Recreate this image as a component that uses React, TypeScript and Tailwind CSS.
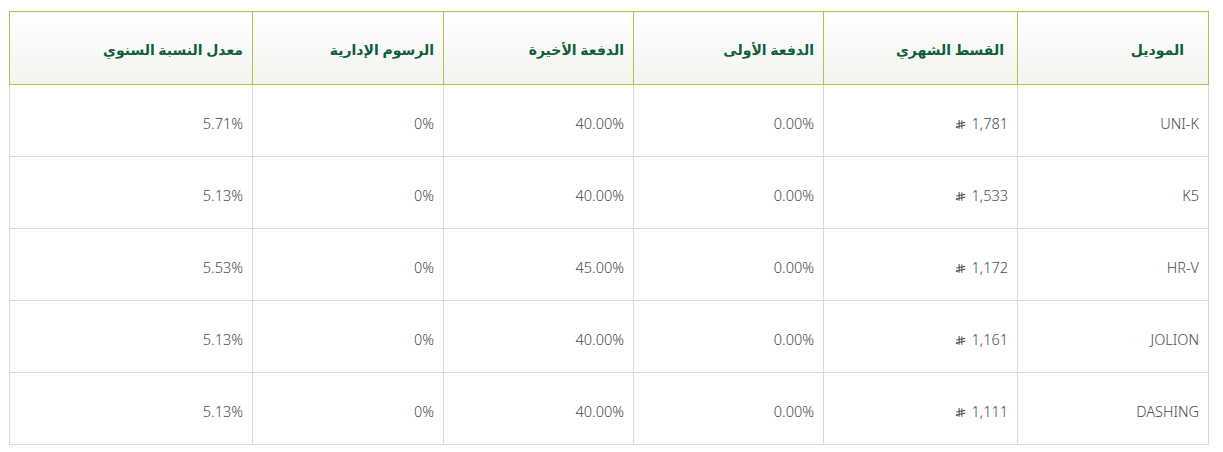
const headers: { label: string; width: string; pad: string }[] = [
  { label: "الموديل", width: "w-[191px]", pad: "pr-[24px]" },
  { label: "القسط الشهري", width: "w-[194px]", pad: "pr-[13px]" },
  { label: "الدفعة الأولى", width: "w-[190px]", pad: "pr-[9px]" },
  { label: "الدفعة الأخيرة", width: "w-[190px]", pad: "pr-[9px]" },
  { label: "الرسوم الإدارية", width: "w-[191px]", pad: "pr-[9px]" },
  { label: "معدل النسبة السنوي", width: "w-[243px]", pad: "pr-[9px]" },
];

const rows = [
  { model: "UNI-K", monthly: "1,781", down: "0.00%", balloon: "40.00%", fees: "0%", rate: "5.71%" },
  { model: "K5", monthly: "1,533", down: "0.00%", balloon: "40.00%", fees: "0%", rate: "5.13%" },
  { model: "HR-V", monthly: "1,172", down: "0.00%", balloon: "45.00%", fees: "0%", rate: "5.53%" },
  { model: "JOLION", monthly: "1,161", down: "0.00%", balloon: "40.00%", fees: "0%", rate: "5.13%" },
  { model: "DASHING", monthly: "1,111", down: "0.00%", balloon: "40.00%", fees: "0%", rate: "5.13%" },
];

function RiyalSign() {
  return (
    <svg
      viewBox="0 0 12 12"
      className="inline-block w-[11px] h-[11px] mr-[6px] align-[-1px] text-[#555]"
      fill="none"
      stroke="currentColor"
      strokeWidth="1.2"
    >
      <path d="M4.5 1v9.5" />
      <path d="M7.5 1.5v9" />
      <path d="M1 9.5c1-0.2 2-0.6 2.6-1.5" />
      <path d="M1.5 5.5l9.5-1.8" />
      <path d="M1.5 8.5l9.5-1.8" />
    </svg>
  );
}

export default function App() {
  const cell = "border border-[#dcdcd6] h-[72px] pr-[9px] pt-[6px] text-right align-middle";
  return (
    <div className="bg-white w-[1223px] h-[452px] pt-[11px] pl-[9px]" style={{ fontFamily: '"Noto Sans", "DejaVu Sans", sans-serif' }}>
      <table dir="rtl" className="border-collapse table-fixed w-[1200px] text-[14.5px] font-light text-[#4a4a4a]">
        <thead>
          <tr>
            {headers.map((h) => (
              <th
                key={h.label}
                className={`${h.width} ${h.pad} h-[73px] pt-[2px] border border-[#b3c04a] bg-gradient-to-b from-white to-[#f2f4ef] text-right font-bold text-[14px] text-[#0f5e3c]`}
              >
                {h.label}
              </th>
            ))}
          </tr>
        </thead>
        <tbody>
          {rows.map((r) => (
            <tr key={r.model}>
              <td className={cell}>{r.model}</td>
              <td className={cell}>
                <span>{r.monthly}</span>
                <RiyalSign />
              </td>
              <td className={cell}>{r.down}</td>
              <td className={cell}>{r.balloon}</td>
              <td className={cell}>{r.fees}</td>
              <td className={cell}>{r.rate}</td>
            </tr>
          ))}
        </tbody>
      </table>
    </div>
  );
}
